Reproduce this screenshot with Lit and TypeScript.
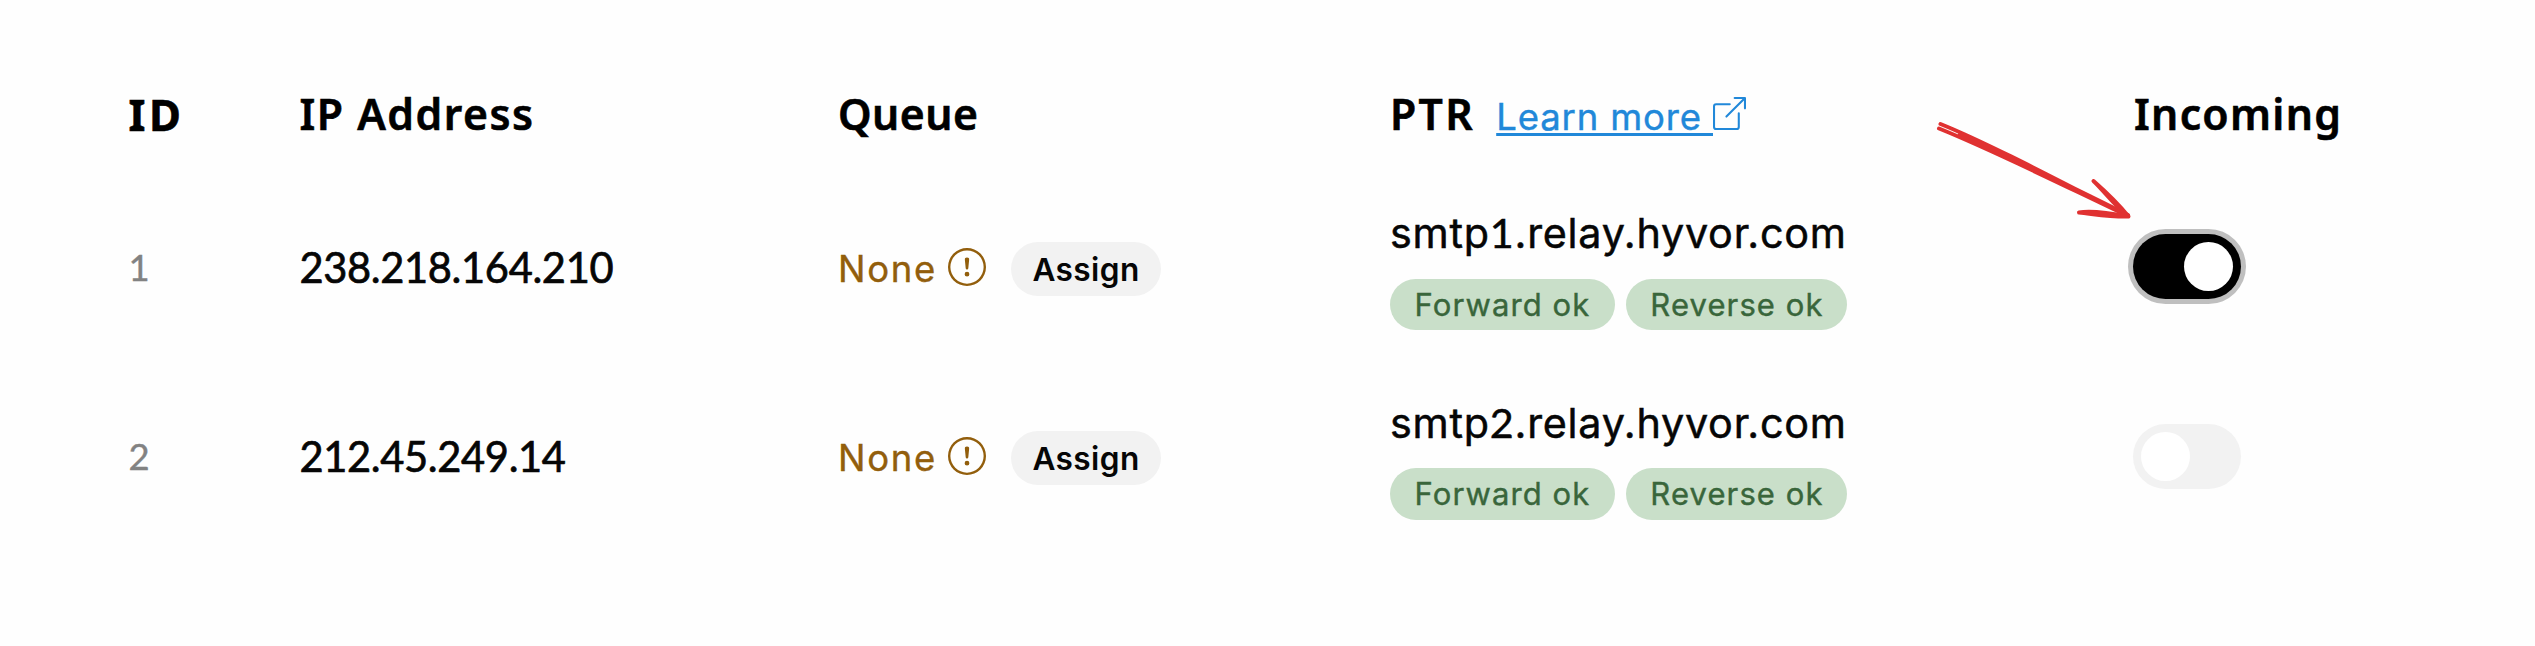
import { LitElement, html, css } from "lit";
import { classMap } from "lit/directives/class-map.js";

interface IpRow { id: number; ip: string; ptr: [string, string, string]; incoming: boolean; }

const ROWS: IpRow[] = [
  { id: 1, ip: "238.218.164.210", ptr: ["smtp", "1", ".relay.hyvor.com"], incoming: true },
  { id: 2, ip: "212.45.249.14", ptr: ["smtp", "2", ".relay.hyvor.com"], incoming: false },
];

class ToggleSwitch extends LitElement {
  static properties = { checked: { type: Boolean } };
  declare checked: boolean;
  static styles = css`
    :host { display: block; }
    .track { box-sizing: border-box; width: 108px; height: 65px; padding: 8px; border-radius: 33px; background: #f2f2f2; display: flex; }
    .track.on { background: #000; justify-content: flex-end; box-shadow: 0 0 0 5px #bfbfbf; }
    .knob { width: 49px; height: 49px; border-radius: 50%; background: #fff; }
  `;
  render() {
    return html`<div class=${classMap({ track: true, on: this.checked })}><div class="knob"></div></div>`;
  }
}
customElements.define("toggle-switch", ToggleSwitch);

class AppRoot extends LitElement {
  static styles = css`
    :host { display: block; position: relative; width: 2535px; height: 646px; overflow: hidden; background: #fefefe; color: #060606; font-family: Inter, sans-serif; white-space: nowrap; }
    .head, .row { display: grid; grid-template-columns: 171px 538.5px 552px 743px 1fr; padding-left: 128.5px; }
    .head { box-sizing: border-box; height: 172px; padding-top: 84px; align-items: start; font: 600 42.7px/60px "Noto Sans", sans-serif; color: #000; -webkit-text-stroke: 0.6px #000; }
    .id-h { letter-spacing: 3.5px; font-weight: 700; font-size: 43.5px; }
    .ip-h { letter-spacing: 1.5px; }
    .queue-h { letter-spacing: 0.5px; }
    .ptr-h { letter-spacing: 2.3px; }
    .in-h { letter-spacing: 1.3px; padding-left: 1px; }
    .ptr-head { display: flex; align-items: baseline; }
    .link { display: flex; align-items: baseline; margin-left: 21.3px; color: #2188d9; font: 400 36.5px/60px Inter, sans-serif; -webkit-text-stroke: 0.4px #2188d9; }
    .link-text { white-space: pre; letter-spacing: 0.85px; text-decoration: underline; text-decoration-thickness: 2.5px; text-underline-offset: 2.5px; text-decoration-skip-ink: none; }
    .row { height: 189.5px; align-items: center; }
    .id { font: 400 36.5px/60px Lato, sans-serif; color: #828282; -webkit-text-stroke: 0.4px #828282; }
    .ip { font: 400 41.6px/60px Lato, sans-serif; letter-spacing: -0.35px; -webkit-text-stroke: 0.7px #060606; }
    .queue { display: flex; align-items: center; padding-top: 4px; }
    .none { font-size: 36.5px; line-height: 54px; letter-spacing: 1.7px; color: #925e0c; -webkit-text-stroke: 0.4px #925e0c; }
    .warn { width: 38px; height: 38px; margin: 0 25px 4px 11px; fill: #925e0c; }
    .assign { box-sizing: border-box; width: 150px; height: 54px; border-radius: 27px; background: #f2f2f2; text-align: center; font-size: 31.6px; line-height: 55px; font-weight: 600; letter-spacing: 0.4px; }
    .host { font-size: 41.3px; line-height: 60px; height: 60px; letter-spacing: 0.75px; -webkit-text-stroke: 0.5px #060606; }
    .digit { font-family: Lato, sans-serif; line-height: 1; }
    .tags { display: flex; gap: 10.5px; margin-top: 15.5px; }
    .tag { box-sizing: border-box; height: 51.5px; width: 225px; border-radius: 26px; background: #c9dfc9; color: #39663b; text-align: center; font-size: 31px; line-height: 51.5px; letter-spacing: 1.1px; -webkit-text-stroke: 0.4px #39663b; }
    .reverse { width: 221px; padding-left: 2px; }
    .ext { width: 33px; height: 33px; fill: #2188d9; stroke: none; }
    .arrow { position: absolute; left: 1930px; top: 115px; width: 210px; height: 110px; }
  `;
  render() {
    return html`
      <div class="head">
        <div class="id-h">ID</div>
        <div class="ip-h">IP Address</div>
        <div class="queue-h">Queue</div>
        <div class="ptr-head">
          <span class="ptr-h">PTR</span>
          <a class="link"><span class="link-text">Learn more </span><svg class="ext" viewBox="0 0 16 16">
            <path d="M8.636 3.5a.5.5 0 0 0-.5-.5H1.5A1.5 1.5 0 0 0 0 4.5v10A1.5 1.5 0 0 0 1.5 16h10a1.5 1.5 0 0 0 1.5-1.5V7.864a.5.5 0 0 0-1 0V14.5a.5.5 0 0 1-.5.5h-10a.5.5 0 0 1-.5-.5v-10a.5.5 0 0 1 .5-.5h6.636a.5.5 0 0 0 .5-.5" />
            <path d="M16 .5a.5.5 0 0 0-.5-.5h-5a.5.5 0 0 0 0 1h3.793L6.146 9.146a.5.5 0 1 0 .708.708L15 1.707V5.5a.5.5 0 0 0 1 0z" />
          </svg></a>
        </div>
        <div class="in-h">Incoming</div>
      </div>
      ${ROWS.map(r => html`
        <div class="row">
          <div class="id">${r.id}</div>
          <div class="ip">${r.ip}</div>
          <div class="queue">
            <span class="none">None</span>
            <svg class="warn" viewBox="0 0 16 16">
              <path d="M8 15A7 7 0 1 1 8 1a7 7 0 0 1 0 14m0 1A8 8 0 1 0 8 0a8 8 0 0 0 0 16" />
              <path d="M7.002 11a1 1 0 1 1 2 0 1 1 0 0 1-2 0M7.1 4.995a.905.905 0 1 1 1.8 0l-.35 3.507a.552.552 0 0 1-1.1 0z" />
            </svg>
            <div class="assign">Assign</div>
          </div>
          <div>
            <div class="host">${r.ptr[0]}<span class="digit">${r.ptr[1]}</span>${r.ptr[2]}</div>
            <div class="tags"><div class="tag">Forward ok</div><div class="tag reverse">Reverse ok</div></div>
          </div>
          <toggle-switch ?checked=${r.incoming}></toggle-switch>
        </div>`)}
      <svg class="arrow" viewBox="1930 115 210 110" fill="none" stroke="#e03131" stroke-width="4" stroke-linecap="round" stroke-linejoin="round">
        <path d="M1940.500 124C1985 142 2050 176 2128 216M1939 128.500C1990 149 2040 174 2128 216M1960 134C2010 157 2060 181 2128 215" />
        <path d="M2093.500 181C2105 192 2114 205 2128.500 216.500C2117 202 2106 192 2093.500 181M2079 212.500C2092 210 2110 213 2128.500 216.500C2110 217 2094 214 2079 212.500" />
      </svg>`;
  }
}
customElements.define("app-root", AppRoot);
